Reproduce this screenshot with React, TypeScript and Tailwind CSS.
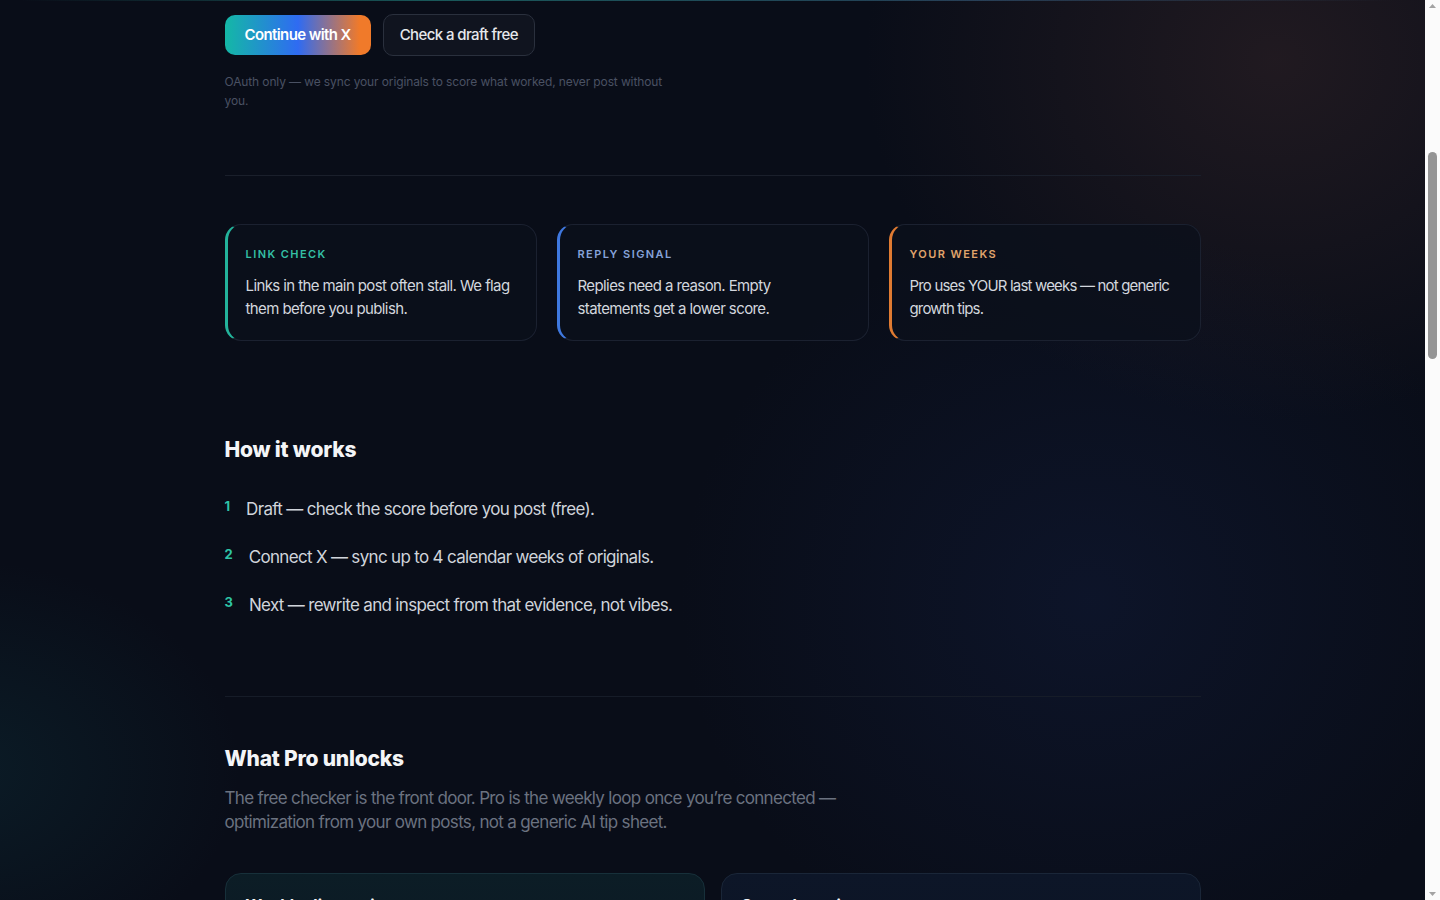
import React from "react";

const font = { fontFamily: "Inter, 'Noto Sans', sans-serif" };

function InsightCard({
  label,
  body,
  border,
  labelColor,
  tracking = "tracking-[-0.04em]",
}: {
  label: string;
  body: string;
  border: string;
  labelColor: string;
  tracking?: string;
}) {
  return (
    <div
      className={`rounded-2xl border border-[#1b2130] border-l-[3px] ${border} bg-[#0b101c]/80 pl-[18px] pr-[25px] pt-[22px] pb-[20px]`}
    >
      <div className={`text-[11px] font-semibold leading-[14px] tracking-[0.13em] ${labelColor}`}>{label}</div>
      <p className={`mt-[13px] text-[15px] leading-[23px] text-[#d3d7de] ${tracking}`}>{body}</p>
    </div>
  );
}

function Step({ n, text }: { n: string; text: string }) {
  return (
    <li className="flex items-start gap-4">
      <span className="text-[13px] font-bold leading-[16px] text-[#2fc4a6] mt-[-1px]">{n}</span>
      <span className="text-[17px] leading-[20px] text-[#d0d4db] tracking-[-0.04em]">{text}</span>
    </li>
  );
}

function FakeScrollbar() {
  return (
    <div className="flex h-screen w-[15px] shrink-0 flex-col items-center bg-[#fbfbfb]">
      <svg width="9" height="15" viewBox="0 0 9 15" className="shrink-0">
        <polygon points="1,8 8,8 4.5,4" fill="#a3a3a3" />
      </svg>
      <div className="mt-[137px] h-[207px] w-[9px] shrink-0 rounded-full bg-[#959595]" />
      <div className="flex-1" />
      <svg width="9" height="15" viewBox="0 0 9 15" className="shrink-0">
        <polygon points="1,7 8,7 4.5,11" fill="#a3a3a3" />
      </svg>
    </div>
  );
}

export default function App() {
  return (
    <div style={font} className="flex h-screen overflow-hidden bg-[#090d18] text-white">
      <div className="relative flex-1 overflow-hidden">
        {/* background glows */}
        <div className="pointer-events-none absolute inset-0">
          <div className="absolute right-[-260px] top-[-300px] h-[720px] w-[820px] rounded-full bg-[radial-gradient(closest-side,rgba(48,34,38,0.6),rgba(48,34,38,0))]" />
          <div className="absolute left-[680px] top-[220px] h-[760px] w-[820px] rounded-full bg-[radial-gradient(closest-side,rgba(22,36,78,0.32),rgba(22,36,78,0))]" />
          <div className="absolute left-[-320px] top-[560px] h-[420px] w-[560px] rounded-full bg-[radial-gradient(closest-side,rgba(16,70,80,0.26),rgba(16,70,80,0))]" />
          <div className="absolute left-[20px] right-[30px] top-0 h-px bg-[linear-gradient(90deg,rgba(45,180,170,0),rgba(45,180,170,0.45)_30%,rgba(70,120,160,0.45)_70%,rgba(45,180,170,0))]" />
        </div>

        <main className="relative mx-auto max-w-5xl px-6">
          {/* CTA row */}
          <div className="flex items-center gap-3 pt-[14px]">
            <button className="h-10 rounded-[10px] bg-[linear-gradient(90deg,#14b8a6_0%,#2f6bf2_50%,#f07a2a_92%)] px-5 pt-px text-[15px] font-semibold text-white tracking-[-0.04em]">
              Continue with X
            </button>
            <button className="h-[42px] rounded-[10px] border border-[#2a303d] bg-[#10141f] px-4 pt-px text-[15px] font-medium text-[#e6e8ec] tracking-[-0.04em]">
              Check a draft free
            </button>
          </div>
          <p className="mt-[16px] max-w-[445px] text-[12px] leading-[19px] text-[#4a5163] tracking-[-0.01em]">
            OAuth only — we sync your originals to score what worked, never post without you.
          </p>

          <div className="mt-[65px] h-px bg-[#1a1f2b]" />

          {/* insight cards */}
          <div className="mt-[48px] grid grid-cols-3 gap-5">
            <InsightCard
              label="LINK CHECK"
              labelColor="text-[#34bfa4]"
              border="border-l-[#23b39b]"
              body="Links in the main post often stall. We flag them before you publish."
            />
            <InsightCard
              label="REPLY SIGNAL"
              labelColor="text-[#86a2d8]"
              border="border-l-[#3f78df]"
              body="Replies need a reason. Empty statements get a lower score."
            />
            <InsightCard
              label="YOUR WEEKS"
              labelColor="text-[#e0a46c]"
              border="border-l-[#e07b32]"
              tracking="tracking-[-0.055em]"
              body="Pro uses YOUR last weeks — not generic growth tips."
            />
          </div>

          {/* How it works */}
          <section className="mt-[95px]">
            <h2 className="text-[21px] font-extrabold leading-7 text-[#f4f5f7] tracking-[-0.01em]">How it works</h2>
            <ol className="mt-[35px] flex flex-col gap-[28px]">
              <Step n="1" text="Draft — check the score before you post (free)." />
              <Step n="2" text="Connect X — sync up to 4 calendar weeks of originals." />
              <Step n="3" text="Next — rewrite and inspect from that evidence, not vibes." />
            </ol>
          </section>

          <div className="mt-[81px] h-px bg-[#161c28]" />

          {/* What Pro unlocks */}
          <section className="mt-[48px]">
            <h2 className="text-[21px] font-extrabold leading-7 text-[#f4f5f7] tracking-[-0.01em]">What Pro unlocks</h2>
            <p className="mt-[13px] max-w-[630px] text-[17px] leading-[24px] text-[#6b7280] tracking-[-0.04em]">
              The free checker is the front door. Pro is the weekly loop once you’re connected — optimization from your own posts, not a generic AI tip sheet.
            </p>
            <div className="mt-[39px] grid grid-cols-2 gap-4">
              <div className="h-[200px] rounded-2xl border border-[#17303a] bg-[linear-gradient(180deg,#0c1d26,#0b1420)] px-5 pt-[19px]">
                <div className="text-[16px] font-bold text-[#f4f5f7]">Weekly diagnosis</div>
              </div>
              <div className="h-[200px] rounded-2xl border border-[#1a2638] bg-[linear-gradient(180deg,#0d1628,#0b1220)] px-5 pt-[19px]">
                <div className="text-[16px] font-bold text-[#f4f5f7]">Scored rewrites</div>
              </div>
            </div>
          </section>
        </main>
      </div>
      <FakeScrollbar />
    </div>
  );
}
